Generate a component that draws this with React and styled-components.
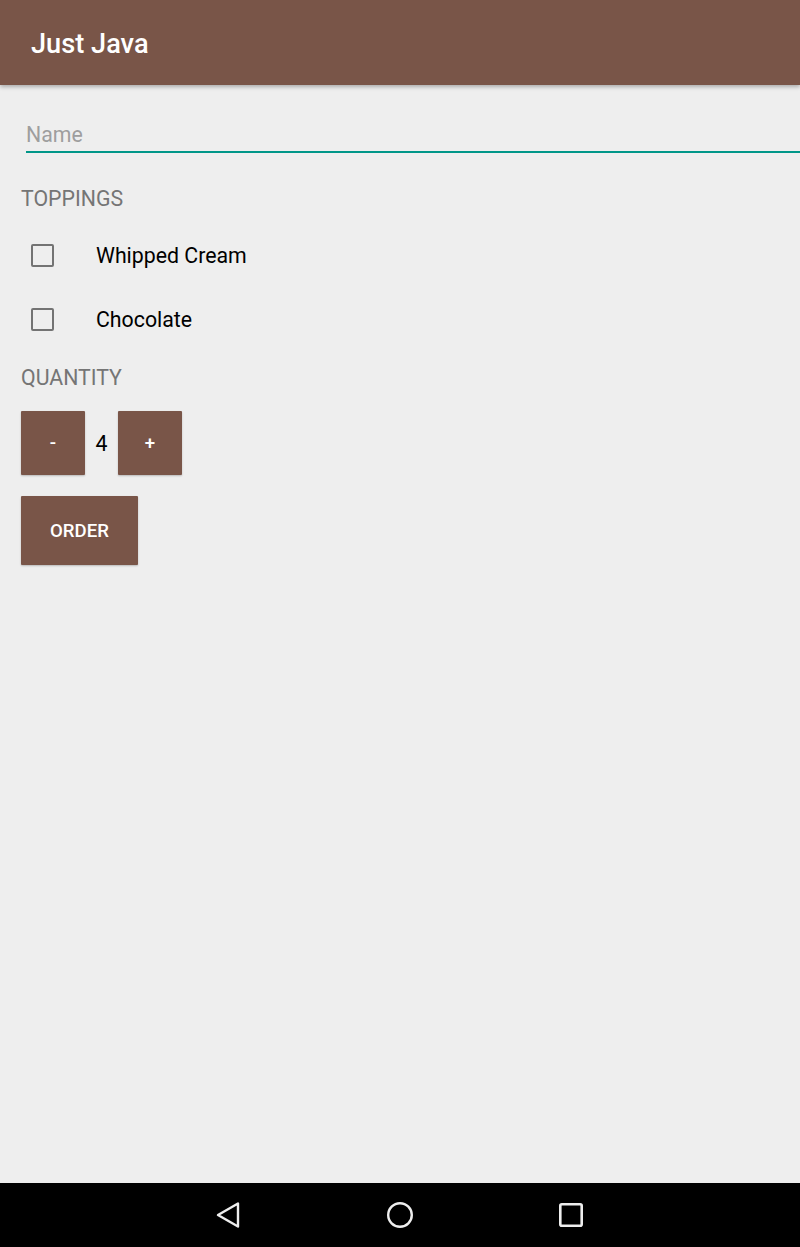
import React from "react";
import styled, { createGlobalStyle } from "styled-components";

const Global = createGlobalStyle`
  html, body {
    margin: 0;
    padding: 0;
    background: #eeeeee;
  }
  * {
    box-sizing: border-box;
  }
`;

const Screen = styled.div`
  display: flex;
  flex-direction: column;
  width: 800px;
  height: 1247px;
  background: #eeeeee;
  font-family: Roboto, "Noto Sans", sans-serif;
  overflow: hidden;
`;

const AppBar = styled.header`
  display: flex;
  align-items: center;
  flex: 0 0 85px;
  padding: 0 0 0 31px;
  background: #795548;
  box-shadow: 0 2px 4px rgba(0, 0, 0, 0.28);
  position: relative;
  z-index: 1;
  h1 {
    margin: 3px 0 0 0;
    font-size: 27.2px;
    font-weight: 500;
    color: #ffffff;
  }
`;

const Content = styled.main`
  display: flex;
  flex-direction: column;
  align-items: flex-start;
  flex: 1;
  padding: 37px 0 0 21px;
`;

const NameInput = styled.input`
  display: block;
  width: calc(100% - 5px);
  height: 31px;
  margin: 0 0 0 5px;
  padding: 0 0 4px 0;
  border: none;
  border-bottom: 2px solid #009688;
  background: transparent;
  font-family: inherit;
  font-size: 21.3px;
  line-height: 25px;
  color: #000;
  outline: none;
  &::placeholder {
    color: #9e9e9e;
  }
`;

const Heading = styled.div`
  margin-top: ${(p) => p.$top}px;
  font-size: 21.3px;
  line-height: 25px;
  color: #757575;
  text-transform: uppercase;
`;

const CheckList = styled.div`
  display: flex;
  flex-direction: column;
  margin-top: 12px;
`;

const CheckRow = styled.label`
  display: flex;
  align-items: center;
  height: 64px;
  padding-left: 10px;
  gap: 42px;
  font-size: 21.3px;
  color: #000;
`;

const Box = styled.span`
  display: block;
  width: 23px;
  height: 23px;
  border: 2.5px solid #737373;
  border-radius: 2px;
`;

const Stepper = styled.div`
  display: flex;
  align-items: center;
  margin-top: 21px;
`;

const Button = styled.button`
  display: flex;
  align-items: center;
  justify-content: center;
  width: ${(p) => p.$w}px;
  height: ${(p) => p.$h}px;
  padding: 0;
  border: none;
  border-radius: 1px;
  background: #795548;
  color: #ffffff;
  font-family: inherit;
  font-size: 18.6px;
  font-weight: 500;
  text-transform: uppercase;
  box-shadow: 0 1px 2px rgba(0, 0, 0, 0.22);
`;

const Count = styled.span`
  width: 33px;
  text-align: center;
  font-size: 21.3px;
  color: #000;
`;

const OrderWrap = styled.div`
  margin-top: 21px;
`;

const NavBar = styled.nav`
  display: flex;
  align-items: center;
  justify-content: center;
  gap: 131px;
  flex: 0 0 64px;
  background: #000000;
`;

const NavSlot = styled.span`
  display: flex;
  align-items: center;
  justify-content: center;
  width: 40px;
  height: 40px;
`;

const App = () => {
  return (
    <Screen>
      <Global />
      <AppBar>
        <h1>Just Java</h1>
      </AppBar>
      <Content>
        <NameInput placeholder="Name" />
        <Heading $top={33}>Toppings</Heading>
        <CheckList>
          <CheckRow>
            <Box />
            Whipped Cream
          </CheckRow>
          <CheckRow>
            <Box />
            Chocolate
          </CheckRow>
        </CheckList>
        <Heading $top={14}>Quantity</Heading>
        <Stepper>
          <Button $w={64} $h={64}>-</Button>
          <Count>4</Count>
          <Button $w={64} $h={64}>+</Button>
        </Stepper>
        <OrderWrap>
          <Button $w={117} $h={69}>Order</Button>
        </OrderWrap>
      </Content>
      <NavBar>
        <NavSlot>
          <svg width="40" height="40" viewBox="0 0 40 40">
            <polygon
              points="9,20 29,8.5 29,31.5"
              fill="none"
              stroke="#eeeeee"
              strokeWidth="2.4"
              strokeLinejoin="round"
            />
          </svg>
        </NavSlot>
        <NavSlot>
          <svg width="40" height="40" viewBox="0 0 40 40">
            <circle cx="20" cy="20" r="11.8" fill="none" stroke="#eeeeee" strokeWidth="2.4" />
          </svg>
        </NavSlot>
        <NavSlot>
          <svg width="40" height="40" viewBox="0 0 40 40">
            <rect x="9.3" y="9.3" width="21.4" height="21.4" rx="1.5" fill="none" stroke="#eeeeee" strokeWidth="2.6" />
          </svg>
        </NavSlot>
      </NavBar>
    </Screen>
  );
};

export default App;
